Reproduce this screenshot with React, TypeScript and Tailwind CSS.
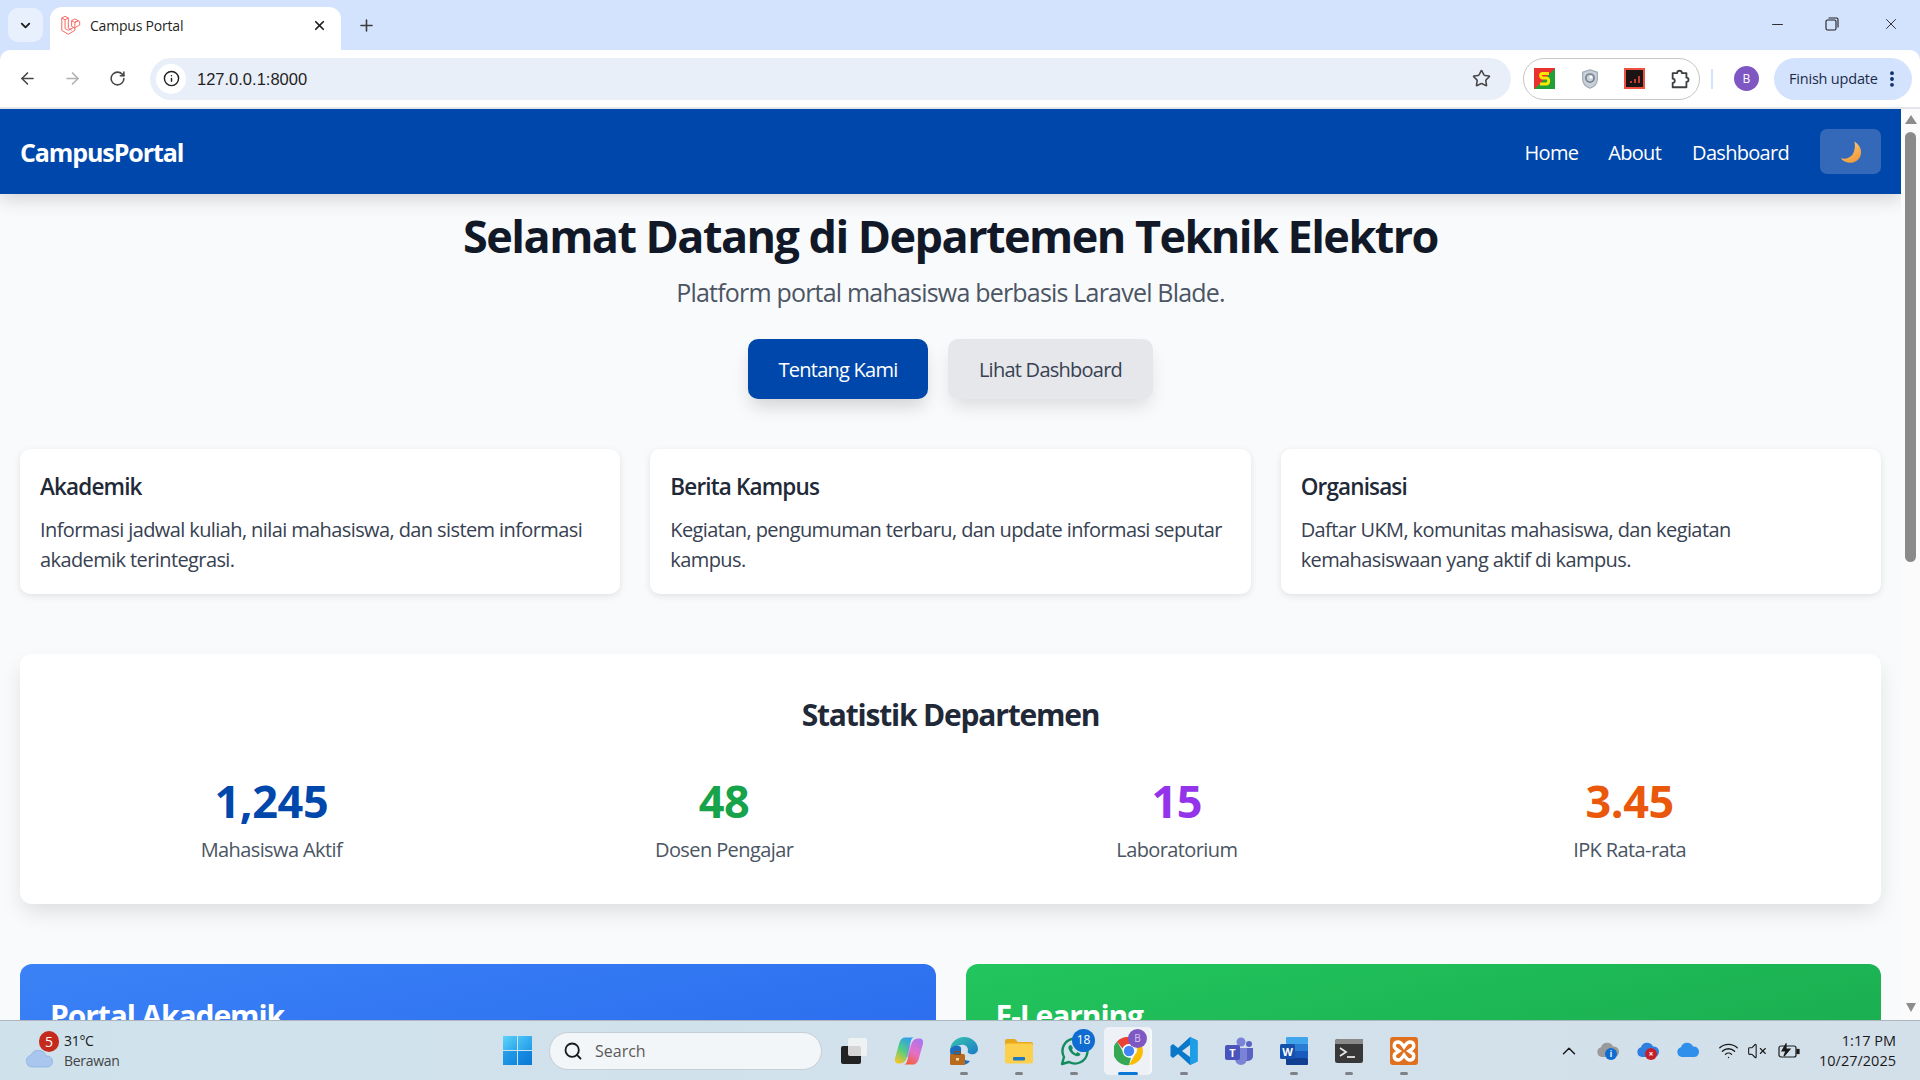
import { ArrowLeft, ArrowRight, ChevronDown, ChevronUp, EllipsisVertical, Info, Minus, Plus, RotateCw, Search, Star, VolumeX, Wifi, X } from 'lucide-react';

const font = "font-['Open_Sans','Noto_Sans',sans-serif]";

const LaravelIcon = () => (
  <svg viewBox="0 0 24 24" className="w-[21px] h-[21px]" fill="none" stroke="#f4645f" strokeWidth="1.1" strokeLinejoin="round">
    <path d="M2 3.5 5.8 1.5 9.5 3.5V15l3.8 2.2M2 3.5V17.500l7.500 4.500 7.500-4.500V13.500L9.500 17.500 5.800 15.500V5.500M2 3.500l3.800 2 3.700-2M17 8.500l3.700-2 1.800 1V11.500l-5.500 3M13.300 6.500 17 4.500 20.700 6.500 17 8.500ZM13.300 6.500V13l3.700 2M17 8.500V13" />
  </svg>
);

const MoonIcon = () => (
  <svg viewBox="0 0 24 24" className="w-[24px] h-[24px]">
    <defs>
      <linearGradient id="moon" x1="0" y1="0" x2="0.6" y2="1">
        <stop offset="0" stopColor="#fcd38a" />
        <stop offset="1" stopColor="#f29b38" />
      </linearGradient>
    </defs>
    <path d="M15.500 1.500C21.500 5 23.500 11.500 21 17c-2.500 5-9 7-14 5-2.200-.8-4-2.200-5-3.800 4.500 1.300 9-.2 11.500-3.700 2.300-3.500 3-8.500 2-13z" fill="url(#moon)" />
  </svg>
);

const ExtS = () => (
  <div className="w-[21px] h-[21px] bg-[linear-gradient(135deg,#e8322f_50%,#21a038_50%)] flex items-center justify-center">
    <svg viewBox="0 0 21 21" className="w-[21px] h-[21px]" fill="none">
      <path d="M15 5.500H8.500C6 5.500 6 9.500 8.500 10H12.500C15.500 10.500 15.500 16 12 16H6" stroke="#ffe600" strokeWidth="3" />
    </svg>
  </div>
);

const ExtShield = () => (
  <svg viewBox="0 0 24 24" className="w-[22px] h-[22px]">
    <path d="M12 2 20 4.500V12c0 5-3.500 8.500-8 10-4.500-1.500-8-5-8-10V4.500z" fill="#c8d0da" stroke="#9aa5b1" strokeWidth="1.200" />
    <circle cx="12" cy="11" r="4.500" fill="none" stroke="#76818d" strokeWidth="1.800" />
    <circle cx="13" cy="10" r="1.500" fill="#fff" />
  </svg>
);

const ExtRed = () => (
  <div className="w-[21px] h-[21px] bg-[#f0513f] p-[2px]">
    <div className="w-full h-full bg-[#1a1414] flex items-end justify-center gap-[2px] pb-[4px]">
      <span className="w-[2px] h-[2px] bg-[#c53a30]" />
      <span className="w-[2px] h-[4px] bg-[#c53a30]" />
      <span className="w-[2px] h-[7px] bg-[#c53a30]" />
    </div>
  </div>
);

const PuzzleIcon = () => (
  <svg viewBox="0 0 24 24" className="w-[22px] h-[22px]" fill="none" stroke="#3c4043" strokeWidth="2" strokeLinejoin="round">
    <path d="M9 5.500a2.500 2.500 0 0 1 5 0H19v5a2.300 2.300 0 0 1 0 4.600V21H4v-4.800a2.300 2.300 0 0 0 0-4.600V5.500z" />
  </svg>
);

const Toolbar = () => (
  <div className="h-[59px] bg-white rounded-t-[10px] flex items-center pl-[18px] pr-[8px] border-b-2 border-[#e3e5e8]">
    <ArrowLeft className="w-[19px] h-[19px] text-[#474747]" strokeWidth={2} />
    <ArrowRight className="w-[19px] h-[19px] text-[#b0b0b0] ml-[26px]" strokeWidth={2} />
    <RotateCw className="w-[17px] h-[17px] text-[#474747] ml-[27px]" strokeWidth={2.200} />
    <div className="ml-[24px] w-[1361px] h-[42px] bg-[#e9eff9] rounded-full flex items-center pl-[6px] pr-[20px]">
      <div className="w-[30px] h-[30px] bg-white rounded-full flex items-center justify-center">
        <Info className="w-[17px] h-[17px] text-[#1f1f1f]" strokeWidth={2} />
      </div>
      <span className="ml-[11px] pt-[2px] text-[16.500px] text-[#1f1f1f] font-['Liberation_Sans',sans-serif]">127.0.0.1:8000</span>
      <Star className="ml-auto w-[19px] h-[19px] text-[#474747]" strokeWidth={2} />
    </div>
    <div className="ml-[12px] w-[177px] h-[42px] border border-[#c4c7c5] rounded-full flex items-center justify-between pl-[10px] pr-[8px]">
      <ExtS />
      <ExtShield />
      <ExtRed />
      <PuzzleIcon />
    </div>
    <div className="ml-[11px] w-[2px] h-[20px] bg-[#d3e3fd]" />
    <div className="ml-[21px] w-[25px] h-[25px] rounded-full bg-[#7e57c2] text-white text-[12px] flex items-center justify-center">B</div>
    <div className="ml-[15px] w-[138px] h-[42px] bg-[#d3e3fd] rounded-full flex items-center pl-[15px] text-[14.500px] text-[#1c2b4a] tracking-[-0.2px]">
      <span>Finish update</span>
      <EllipsisVertical className="w-[20px] h-[20px] ml-[4px] text-[#0b2a63]" strokeWidth={2.600} />
    </div>
  </div>
);

const BrowserChrome = () => (
  <div className="bg-[#d3e3fd] shrink-0">
    <div className="h-[50px] flex items-end relative">
      <div className="self-start mt-[8px] ml-[8px] w-[35px] h-[34px] rounded-[10px] bg-[#e9f0fd] flex items-center justify-center">
        <ChevronDown className="w-[15px] h-[15px] text-[#1f1f1f]" strokeWidth={3} />
      </div>
      <div className="ml-[7px] w-[291px] h-[43px] bg-white rounded-t-[12px] flex items-center pl-[10px] pr-[14px] pb-[7px]">
        <LaravelIcon />
        <span className="ml-[9px] text-[14px] text-[#1f1f1f] tracking-[-0.2px]">Campus Portal</span>
        <X className="ml-auto w-[15px] h-[15px] text-[#1f1f1f]" strokeWidth={2.800} />
      </div>
      <Plus className="self-center ml-[16px] w-[19px] h-[19px] text-[#3c3c3c]" strokeWidth={2} />
      <div className="ml-auto self-start mt-[15px] flex items-center text-[#1f1f1f]">
        <Minus className="w-[17px] h-[17px]" strokeWidth={1.300} />
        <svg viewBox="0 0 14 14" className="w-[14px] h-[14px] ml-[39px]" fill="none" stroke="#1f1f1f" strokeWidth="1.100">
          <rect x="1" y="3" width="10" height="10" rx="1.500" />
          <path d="M3.500 1H11.500A1.500 1.500 0 0 1 13 2.500V10.500" />
        </svg>
        <X className="w-[18px] h-[18px] ml-[43px] mr-[20px]" strokeWidth={1.200} />
      </div>
    </div>
    <Toolbar />
  </div>
);

const Navbar = () => (
  <nav className="relative z-10 h-[85px] bg-[#0047ab] shadow-[0_5px_18px_rgba(0,0,0,0.16)] flex items-center justify-between px-[20px] text-white">
    <span className="pt-[2px] text-[25px] font-bold tracking-[-1.100px]">CampusPortal</span>
    <div className="flex items-center text-[20px] tracking-[-0.7px]">
      <a className="pt-[2px]">Home</a>
      <a className="pt-[2px] ml-[30px]">About</a>
      <a className="pt-[2px] ml-[31px]">Dashboard</a>
      <button className="ml-[31px] w-[61px] h-[45px] rounded-[7px] bg-[#3369b8] flex items-center justify-center">
        <MoonIcon />
      </button>
    </div>
  </nav>
);

const infoCards = [
  { title: 'Akademik', text: 'Informasi jadwal kuliah, nilai mahasiswa, dan sistem informasi akademik terintegrasi.' },
  { title: 'Berita Kampus', text: 'Kegiatan, pengumuman terbaru, dan update informasi seputar kampus.' },
  { title: 'Organisasi', text: 'Daftar UKM, komunitas mahasiswa, dan kegiatan kemahasiswaan yang aktif di kampus.' },
];

const stats = [
  { value: '1,245', label: 'Mahasiswa Aktif', color: 'text-[#0047ab]' },
  { value: '48', label: 'Dosen Pengajar', color: 'text-[#16a34a]' },
  { value: '15', label: 'Laboratorium', color: 'text-[#9333ea]' },
  { value: '3.45', label: 'IPK Rata-rata', color: 'text-[#ea580c]' },
];

const MainContent = () => (
  <main className="px-[20px] pt-[17px]">
    <section className="text-center">
      <h1 className="text-[45px] leading-[50px] font-bold text-[#111827] tracking-[-1.550px]">Selamat Datang di Departemen Teknik Elektro</h1>
      <p className="mt-[13px] text-[25px] leading-[37px] text-[#4b5563] tracking-[-0.8px]">Platform portal mahasiswa berbasis Laravel Blade.</p>
      <div className="mt-[28px] flex justify-center gap-[20px] text-[20px] tracking-[-0.75px]">
        <button className="w-[180px] h-[60px] pt-[2px] rounded-[10px] bg-[#0047ab] text-white shadow-[0_10px_18px_-3px_rgba(0,0,0,0.16)]">Tentang Kami</button>
        <button className="w-[205px] h-[60px] pt-[2px] rounded-[10px] bg-[#e5e7eb] text-[#374151] shadow-[0_10px_18px_-3px_rgba(0,0,0,0.12)]">Lihat Dashboard</button>
      </div>
    </section>

    <section className="mt-[50px] grid grid-cols-3 gap-[30px]">
      {infoCards.map((card) => (
        <div key={card.title} className="h-[145px] bg-white rounded-[10px] shadow-[0_2px_7px_rgba(0,0,0,0.1)] px-[20px] pt-[21px]">
          <h3 className="text-[22.500px] leading-[34px] font-semibold text-[#1f2937] tracking-[-0.85px]">{card.title}</h3>
          <p className="mt-[11px] text-[20px] leading-[30px] text-[#374151] tracking-[-0.6px]">{card.text}</p>
        </div>
      ))}
    </section>

    <section className="mt-[60px] h-[250px] bg-white rounded-[12px] shadow-[0_10px_22px_-3px_rgba(0,0,0,0.12)] pt-[39px] text-center">
      <h2 className="text-[30px] leading-[44px] font-bold text-[#1f2937] tracking-[-1.200px]">Statistik Departemen</h2>
      <div className="mt-[39px] grid grid-cols-4 px-[25px]">
        {stats.map((stat) => (
          <div key={stat.label}>
            <div className={`text-[45px] leading-[50px] font-bold tracking-[-0.4px] ${stat.color}`}>{stat.value}</div>
            <div className="mt-[9px] text-[20px] leading-[30px] text-[#4b5563] tracking-[-0.6px]">{stat.label}</div>
          </div>
        ))}
      </div>
    </section>

    <section className="mt-[60px] grid grid-cols-2 gap-[30px] text-white">
      <div className="h-[200px] rounded-[12px] bg-gradient-to-br from-[#3b82f6] to-[#2563eb] p-[30px]">
        <h3 className="text-[30px] leading-[44px] font-bold tracking-[-1.100px]">Portal Akademik</h3>
      </div>
      <div className="h-[200px] rounded-[12px] bg-gradient-to-br from-[#22c55e] to-[#16a34a] p-[30px]">
        <h3 className="text-[30px] leading-[44px] font-bold tracking-[-1.100px]">E-Learning</h3>
      </div>
    </section>
  </main>
);

const Scrollbar = () => (
  <div className="w-[19px] shrink-0 bg-[#fbfbfb] flex flex-col items-center pt-[6px] pb-[8px]">
    <div className="w-0 h-0 border-x-[6px] border-x-transparent border-b-[9px] border-b-[#8c8c8c]" />
    <div className="mt-[8px] w-[11px] h-[430px] rounded-full bg-[#8a8a8a]" />
    <div className="mt-auto w-0 h-0 border-x-[5px] border-x-transparent border-t-[9px] border-t-[#8c8c8c]" />
  </div>
);

const WinLogo = () => (
  <div className="grid grid-cols-2 gap-[1.500px] w-[29px] h-[29px]">
    <span className="bg-[linear-gradient(135deg,#5fd3f8,#2aa7ec)]" />
    <span className="bg-[linear-gradient(135deg,#4cc3f5,#1f9be8)]" />
    <span className="bg-[linear-gradient(135deg,#2ba2ea,#0f86de)]" />
    <span className="bg-[linear-gradient(135deg,#1a90e4,#0a78d6)]" />
  </div>
);

const TaskView = () => (
  <svg viewBox="0 0 30 30" className="w-[30px] h-[30px]">
    <rect x="2" y="10" width="20" height="18" rx="2" fill="#222" />
    <rect x="9" y="2" width="19" height="18" rx="2" fill="#f4f4f4" opacity="0.85" />
  </svg>
);

const Copilot = () => (
  <svg viewBox="0 0 30 30" className="w-[30px] h-[30px]">
    <defs>
      <linearGradient id="copA" x1="0.7" y1="0" x2="0.2" y2="1">
        <stop offset="0" stopColor="#2f9df0" />
        <stop offset="0.5" stopColor="#4fce84" />
        <stop offset="1" stopColor="#f7c325" />
      </linearGradient>
      <linearGradient id="copB" x1="0.8" y1="0" x2="0.3" y2="1">
        <stop offset="0" stopColor="#a974f2" />
        <stop offset="0.55" stopColor="#e76fc4" />
        <stop offset="1" stopColor="#f4603c" />
      </linearGradient>
    </defs>
    <path d="M11 1.500h9c-2 .5-3 2-3.500 5L13 21c-1 3.500-3 6.500-7 6.500H4C1.800 27.500 .5 25 1 22.500L5 8c1-4 3-6.500 6-6.500z" fill="url(#copA)" />
    <path d="M19 28.500h-9c2-.5 3-2 3.500-5L17 9c1-3.500 3-6.500 7-6.500h2c2.200 0 3.500 2.500 3 5L25 22c-1 4-3 6.500-6 6.500z" fill="url(#copB)" />
    <path d="M13.500 9h3l-1 12h-3z" fill="#8f7fe0" opacity="0.55" />
  </svg>
);

const Edge = () => (
  <svg viewBox="0 0 30 30" className="w-[30px] h-[30px]">
    <defs>
      <linearGradient id="edgeG" x1="0" y1="0" x2="1" y2="1">
        <stop offset="0" stopColor="#36c5ab" />
        <stop offset="1" stopColor="#1b7cc9" />
      </linearGradient>
    </defs>
    <path d="M1 14C2 6 8 1 15 1c8 0 14 6 14 12 0 4-4 6-8 5-2-1-3-2-2-4 0-3-3-6-7-5-5 1-9 2-11 5z" fill="url(#edgeG)" />
    <path d="M1 15c0-4 5-6 9-5 3 1 2 4 2 7 0 5 4 8 9 8-2 3-6 4-9 4C6 29 1 22 1 15z" fill="#1a6fc0" />
    <rect x="1" y="18" width="15" height="11" rx="1.500" fill="#b86b1e" />
    <rect x="5.500" y="15.500" width="6" height="3" rx="1" fill="none" stroke="#8b4c10" strokeWidth="1.200" />
    <rect x="7" y="22" width="3" height="2.500" fill="#f5d9a5" />
  </svg>
);

const Folder = () => (
  <svg viewBox="0 0 30 30" className="w-[30px] h-[30px]">
    <path d="M1 5a2 2 0 0 1 2-2h8l3 3h13a2 2 0 0 1 2 2v3H1z" fill="#e8a91d" />
    <rect x="1" y="7.500" width="28" height="20" rx="2" fill="#fcd04d" />
    <rect x="9" y="21" width="12" height="3.500" rx="1" fill="#1d78c4" />
  </svg>
);

const WhatsApp = () => (
  <svg viewBox="0 0 30 30" className="w-[30px] h-[30px]" fill="none">
    <path d="M3 28l2-7a12.500 12.500 0 1 1 5 5z" stroke="#128c5e" strokeWidth="2.400" strokeLinejoin="round" />
    <path d="M11 9c-2 1-2 3-1 5 1.500 3 4 5 7 6 2 .5 4 0 4.500-2l-3-2-1.500 1.500c-2-.8-3.200-2-4-4L14 12l-2-3z" fill="#128c5e" />
  </svg>
);

const ChromeIcon = () => (
  <svg viewBox="0 0 30 30" className="w-[30px] h-[30px]">
    <path d="M15 1a14 14 0 0 1 12.100 7H15a7 7 0 0 0-6.500 4.500L3 5.500A14 14 0 0 1 15 1z" fill="#ea4335" />
    <path d="M27.100 8A14 14 0 0 1 15 29l6-10.500A7 7 0 0 0 21 8z" fill="#fbbc04" />
    <path d="M15 29A14 14 0 0 1 3 5.500L9 15.500A7 7 0 0 0 17 21.700z" fill="#34a853" />
    <circle cx="15" cy="15" r="6.500" fill="#fff" />
    <circle cx="15" cy="15" r="5.200" fill="#4285f4" />
  </svg>
);

const VSCode = () => (
  <svg viewBox="0 0 30 30" className="w-[30px] h-[30px]">
    <path d="M21 1 28.500 4.500V25.500L21 29 9 18l-5 4-2.500-2V10L4 8l5 4z" fill="#0a78c9" />
    <path d="M21 1 28.500 4.500V25.500L21 29z" fill="#1f9ee8" />
    <path d="M21 9v12l-8-6z" fill="#d6e2ee" />
  </svg>
);

const Teams = () => (
  <svg viewBox="0 0 30 30" className="w-[30px] h-[30px]">
    <circle cx="17" cy="6" r="4.500" fill="#7b83d6" />
    <circle cx="25" cy="8" r="3" fill="#5a62c4" />
    <path d="M20 12h9v8a5 5 0 0 1-5 5h-4z" fill="#5a62c4" />
    <path d="M9 12h14v11a6 6 0 0 1-12 0z" fill="#7b83d6" />
    <rect x="1" y="9" width="15" height="15" rx="2" fill="#4b53bc" />
    <text x="8.500" y="21" fontSize="11" fontWeight="700" fill="#fff" textAnchor="middle" fontFamily="Open Sans, sans-serif">T</text>
  </svg>
);

const WordIcon = () => (
  <svg viewBox="0 0 30 30" className="w-[30px] h-[30px]">
    <rect x="7" y="1" width="22" height="7" rx="1" fill="#41a5ee" />
    <rect x="7" y="8" width="22" height="7" fill="#2b7cd3" />
    <rect x="7" y="15" width="22" height="7" fill="#185abd" />
    <rect x="7" y="22" width="22" height="7" rx="1" fill="#103f91" />
    <rect x="1" y="8" width="15" height="15" rx="1.500" fill="#1550ad" />
    <text x="8.500" y="20" fontSize="11" fontWeight="700" fill="#fff" textAnchor="middle" fontFamily="Open Sans, sans-serif">W</text>
  </svg>
);

const Terminal = () => (
  <svg viewBox="0 0 30 30" className="w-[30px] h-[30px]">
    <rect x="1" y="3" width="28" height="24" rx="2.500" fill="#383838" />
    <path d="M1 5.500A2.500 2.500 0 0 1 3.500 3h25.500v5H1z" fill="#8a8a8a" />
    <path d="M6 12l6 4-6 4" fill="none" stroke="#e6e6e6" strokeWidth="1.800" />
    <path d="M13 21h8" stroke="#e6e6e6" strokeWidth="1.800" />
  </svg>
);

const Xampp = () => (
  <svg viewBox="0 0 30 30" className="w-[30px] h-[30px]">
    <rect x="1" y="1" width="28" height="28" rx="3" fill="#e0701f" />
    <path d="M9 6c-4 0-5 5-2 7l3 2-3 2c-3 2-2 7 2 7 3 0 4-2 6-5 2 3 3 5 6 5 4 0 5-5 2-7l-3-2 3-2c3-2 2-7-2-7-3 0-4 2-6 5-2-3-3-5-6-5z" fill="none" stroke="#fff" strokeWidth="3.400" />
  </svg>
);

const appIcons = [
  { name: 'taskview', icon: <TaskView />, open: false },
  { name: 'copilot', icon: <Copilot />, open: false },
  { name: 'edge', icon: <Edge />, open: true },
  { name: 'files', icon: <Folder />, open: true },
  { name: 'whatsapp', icon: <WhatsApp />, open: true, badge: '18' },
  { name: 'chrome', icon: <ChromeIcon />, open: false, active: true },
  { name: 'vscode', icon: <VSCode />, open: true },
  { name: 'teams', icon: <Teams />, open: false },
  { name: 'word', icon: <WordIcon />, open: true },
  { name: 'terminal', icon: <Terminal />, open: true },
  { name: 'xampp', icon: <Xampp />, open: true },
];

const TaskbarApp = ({ app }: { app: (typeof appIcons)[number] }) => (
  <div className="relative w-[55px] h-[60px] flex items-center justify-center">
    {app.active && <div className="absolute left-[3px] top-[6px] w-[48px] h-[48px] rounded-[5px] bg-[#eef2f6] border-r-2 border-[#f7f9fb]" />}
    <div className="relative">{app.icon}</div>
    {app.badge && (
      <span className="absolute left-[26px] top-[8px] w-[23px] h-[23px] rounded-full bg-[#0f6cd0] text-white text-[12px] flex items-center justify-center">{app.badge}</span>
    )}
    {app.active && (
      <span className="absolute left-[27px] top-[8px] w-[19px] h-[19px] rounded-full bg-[#7e57c2] text-[#d9c9f2] text-[10px] flex items-center justify-center">B</span>
    )}
    {app.open && <span className="absolute left-[24px] bottom-[6px] w-[8px] h-[3px] rounded-full bg-[#7d8289]" />}
    {app.active && <span className="absolute left-[17px] bottom-[6px] w-[20px] h-[3px] rounded-full bg-[#0a78d6]" />}
  </div>
);

const CloudTray = ({ color, badge }: { color: string; badge?: string }) => (
  <div className="relative w-[24px] h-[18px]">
    <svg viewBox="0 0 24 16" className="w-[24px] h-[16px]">
      <path d="M6 15a5 5 0 0 1-1-9.800A6.500 6.500 0 0 1 17 4.500 5.300 5.300 0 0 1 18.500 15z" fill={color} />
    </svg>
    {badge && (
      <span className={`absolute left-[9px] top-[6px] w-[12px] h-[12px] rounded-full text-white text-[8px] leading-[12px] font-bold text-center ${badge === 'i' ? 'bg-[#0f6cd0]' : 'bg-[#c4202b]'}`}>{badge}</span>
    )}
  </div>
);

const Taskbar = () => (
  <div className="relative z-20 h-[60px] shrink-0 border-t border-[#aeb6be] bg-gradient-to-r from-[#cfe2ec] via-[#d2e1ec] to-[#d3e0ea] flex items-center text-[#1a1a1a]">
    <div className="relative ml-[25px] w-[30px] h-[40px]">
      <svg viewBox="0 0 30 18" className="absolute left-0 top-[19px] w-[30px] h-[18px]">
        <path d="M7 17a6 6 0 0 1-1-11.800A8 8 0 0 1 21 6a5.500 5.500 0 0 1 2 11z" fill="#a8c6ee" stroke="#7fa5dc" strokeWidth="0.600" />
      </svg>
      <span className="absolute left-[14px] top-[0px] w-[20px] h-[21px] rounded-full bg-[#c42b1c] text-white text-[14px] leading-[21px] text-center">5</span>
    </div>
    <div className="ml-[9px] w-[70px] text-[14px] leading-[20px] tracking-[-0.3px]">
      <div>31°C</div>
      <div className="text-[#444]">Berawan</div>
    </div>
    <div className="ml-[369px]">
      <WinLogo />
    </div>
    <div className="ml-[17px] w-[273px] h-[38px] rounded-full bg-[#f3f6f9] border border-[#c6ced6] flex items-center pl-[13px] text-[16px] text-[#5a5a5a]">
      <Search className="w-[20px] h-[20px] text-[#1a1a1a]" strokeWidth={2.200} />
      <span className="ml-[12px]">Search</span>
    </div>
    <div className="ml-[4px] flex">
      {appIcons.map((app) => (
        <TaskbarApp key={app.name} app={app} />
      ))}
    </div>
    <div className="ml-[127px] flex items-center">
      <ChevronUp className="w-[22px] h-[22px]" strokeWidth={1.600} />
      <div className="ml-[16px]"><CloudTray color="#9a9a9a" badge="i" /></div>
      <div className="ml-[16px]"><CloudTray color="#2f7fe0" badge="×" /></div>
      <div className="ml-[16px]"><CloudTray color="#2f8fea" /></div>
      <Wifi className="ml-[18px] w-[21px] h-[21px]" strokeWidth={1.500} />
      <VolumeX className="ml-[8px] w-[20px] h-[20px]" strokeWidth={1.300} />
      <svg viewBox="0 0 22 16" className="ml-[11px] w-[22px] h-[16px]" fill="none" stroke="#1a1a1a" strokeWidth="1.200">
        <rect x="1" y="3" width="17" height="11" rx="2" />
        <rect x="19" y="6.500" width="2" height="4" fill="#1a1a1a" />
        <path d="M8 1 4 8h4l-2 5 6-7H8z" fill="#1a1a1a" />
      </svg>
    </div>
    <div className="ml-auto mr-[24px] text-right text-[14.500px] leading-[20px]">
      <div>1:17 PM</div>
      <div>10/27/2025</div>
    </div>
  </div>
);

export default function App() {
  return (
    <div className={`w-screen h-screen overflow-hidden flex flex-col ${font}`}>
      <BrowserChrome />
      <div className="flex-1 min-h-0 flex">
        <div className="flex-1 min-w-0 overflow-hidden bg-[#f9fafb]">
          <Navbar />
          <MainContent />
        </div>
        <Scrollbar />
      </div>
      <Taskbar />
    </div>
  );
}
